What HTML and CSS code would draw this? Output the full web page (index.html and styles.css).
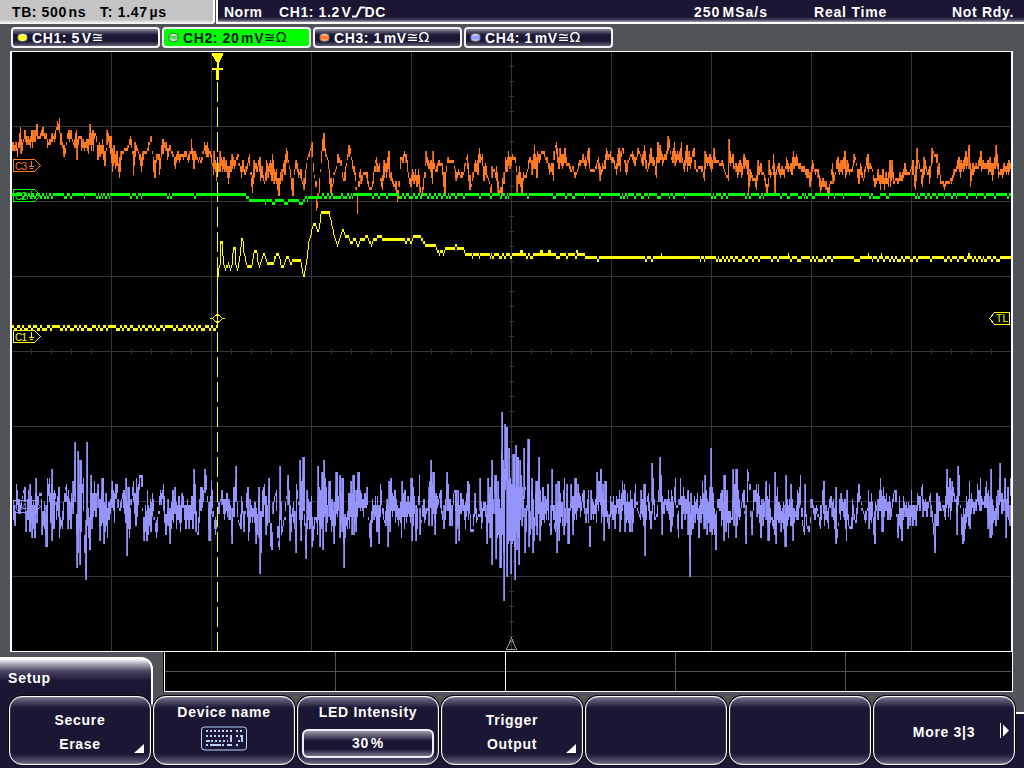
FILE: index.html
```html
<!DOCTYPE html>
<html lang="en">
<head>
    <meta charset="UTF-8">
    <title>Oscilloscope</title>
    <link rel="stylesheet" href="styles.css">
</head>
<body>
    <div class="topbar">
        <div class="timebase"><span class="tb">TB: 500&#8202;ns</span><span class="tpos">T: 1.47&#8202;µs</span></div>
        <div class="status">
            <span class="mode">Norm</span>
            <span class="trig">CH1: 1.2&#8202;V<svg class="edge" width="13" height="12"><path d="M0 10.5h4.5l4-9h4.5"/></svg>DC</span>
            <span class="rate">250&#8202;MSa/s</span>
            <span class="acq">Real Time</span>
            <span class="ready">Not Rdy.</span>
        </div>
    </div>
    <div class="channels">
        <div class="channel"><i class="led yellow"></i><span class="ch-text">CH1: 5&#8202;V</span><span class="coupling">≅</span></div>
        <div class="channel active"><i class="led green"></i><span class="ch-text">CH2: 20&#8202;mV</span><span class="coupling">≅Ω</span></div>
        <div class="channel"><i class="led orange"></i><span class="ch-text">CH3: 1&#8202;mV</span><span class="coupling">≅Ω</span></div>
        <div class="channel"><i class="led violet"></i><span class="ch-text">CH4: 1&#8202;mV</span><span class="coupling">≅Ω</span></div>
    </div>
    <div class="screen">
        <svg class="plot" width="999" height="599" viewBox="12 52 999 599">
            <path id="grid" class="grid"/>
            <g class="marker c3">
                <path d="M13.5 159.5h21l6 6l-6 6h-21z"/><text x="15" y="169.500" textLength="12">C3</text><path d="M31.5 161v6M29 166.5h5M30 168.5h3"/>
            </g>
            <g class="marker c2">
                <path d="M13.5 189.5h21l6 6l-6 6h-21z"/><text x="15" y="199.500" textLength="12">C2</text><path d="M31.5 191v6M29 196.5h5M30 198.5h3"/>
            </g>
            <g class="marker c1">
                <path d="M13.5 330.5h21l6 6l-6 6h-21z"/><text x="15" y="340.500" textLength="12">C1</text><path d="M31.5 332v6M29 337.5h5M30 339.5h3"/>
            </g>
            <path id="trace4-dim" class="trace dim4"/>
            <path id="trace4" class="trace ch4"/>
            <g class="marker c4">
                <path d="M13.5 500.5h21l6 6l-6 6h-21z"/><text x="15" y="510.500" textLength="12">C4</text><path d="M31.5 502v6M29 507.5h5M30 509.5h3"/>
            </g>
            <path id="trace3-dim" class="trace dim3"/>
            <path id="trace3" class="trace ch3"/>
            <path id="trace2" class="trace ch2"/>
            <path id="trace1" class="trace ch1"/>
            <!-- trigger position and level -->
            <path class="cursor" d="M217.5 82V651"/>
            <path class="trig-mark" d="M212 53h11v2l-4 8v5h4v2h-4v10h-3v-10h-4v-2h5v-5l-5-8z"/>
            <path class="level" d="M217.5 314l5 4.500l-5 4.500l-5-4.500zM210 318.500h3M222 318.500h3"/>
            <path class="level" d="M1009.500 312.500h-15l-5 6l5 6h15z"/>
            <text class="level-text" x="996" y="322" textLength="12">TL</text>
            <path class="ref" d="M511.500 638l5 11.500h-10z"/>
        </svg>
    </div>
    <div class="lower">
        <div class="tab">Setup</div>
        <svg class="strip" width="850" height="40">
            <path class="strip-grid" d="M2 19.500h846M172.500 0v39M512.500 0v39M682.500 0v39"/>
            <path class="strip-center" d="M342.500 0v39"/>
            <path class="strip-frame" d="M1 0V39.500H849V0"/>
        </svg>
    </div>
    <div class="menu">
        <button class="softkey"><span>Secure</span><span>Erase</span><svg class="corner" width="10" height="10"><path d="M10 0V9H0z"/></svg></button>
        <button class="softkey top"><span>Device name</span>
            <svg class="keyboard" width="46" height="25">
                <rect x=".5" y="1" width="45" height="23" rx="3"/>
                <path d="M5 5h27M35 5h7M5 10h27M35 10h7M10 15h17M5 19h2M21 19h3M35 19h4" stroke-dasharray="2 2"/>
                <path d="M5 15h4M9 19h11M26 19h5M30 9v7M41 9v7M37 15h2"/>
            </svg>
        </button>
        <button class="softkey top"><span>LED Intensity</span><span class="value">30&#8202;%</span></button>
        <button class="softkey"><span>Trigger</span><span>Output</span><svg class="corner" width="10" height="10"><path d="M10 0V9H0z"/></svg></button>
        <button class="softkey"></button>
        <button class="softkey"></button>
        <button class="softkey"><span>More 3|3</span><svg class="next" width="9" height="15"><path d="M0 0h1v15h-1zM3 1.500l6 6l-6 6z"/></svg></button>
    </div>
    <script src="script.js"></script>
</body>
</html>
```
FILE: styles.css
```css
body {
    margin: 0;
    width: 1024px;
    height: 768px;
    overflow: hidden;
    background-color: #505458;
    color: #fff;
    font-family: "Liberation Sans", Arial, sans-serif;
    font-size: 14px;
    font-weight: bold;
    letter-spacing: 0.5px;
}
span {
    white-space: nowrap;
}
.topbar {
    display: flex;
    height: 24px;
    line-height: 24px;
    background-color: #505458;
}
.timebase {
    box-sizing: border-box;
    width: 215px;
    padding-left: 12px;
    background: linear-gradient(#c4c4c4 20px, #e8e8e8 22px, #fff);
    border-right: 2px solid #fff;
    border-radius: 0 0 3px 0;
    color: #000;
}
.tb {
    display: inline-block;
    width: 88px;
    letter-spacing: 0.6px;
}
.tpos {
    letter-spacing: 0.7px;
}
.status {
    box-sizing: border-box;
    display: flex;
    width: 808px;
    margin-left: 1px;
    padding-left: 6px;
    border-left: 2px solid #fff;
    background: linear-gradient(#1a1633 17px, #4a4660 20px, #aaa8b4 22px, #fff 22px);
}
.mode {
    width: 55px;
}
.trig {
    width: 415px;
    letter-spacing: 0.6px;
}
.edge {
    fill: none;
    stroke: #fff;
    stroke-width: 2;
    vertical-align: -1px;
}
.rate {
    width: 120px;
    letter-spacing: 1px;
}
.acq {
    width: 138px;
    letter-spacing: 0.8px;
}
.ready {
    letter-spacing: 0.7px;
}
.channels {
    display: flex;
    gap: 2px;
    height: 21px;
    padding: 3px 11px;
}
.channel {
    box-sizing: border-box;
    display: flex;
    align-items: center;
    width: 149px;
    height: 21px;
    padding-left: 5px;
    border: 2px solid #f4f4f8;
    border-radius: 4px;
    background: linear-gradient(#8b889b, #1a1633 6px, #1a1633 12px, #625f74);
}
.channel.active {
    background: #0f0;
    color: #0b1c2c;
}
.led {
    box-sizing: border-box;
    width: 11px;
    height: 9px;
    margin-left: -1px;
    margin-right: 4px;
    border: 1px solid #606060;
    border-radius: 5px;
}
.yellow { background: linear-gradient(#ffffc0, #ff0 45%, #ffff70); }
.green { background: linear-gradient(#e0ffe0, #4c4 45%, #d0ffd0); }
.orange { background: linear-gradient(#ffd0b0, #ff7020 45%, #ffb080); }
.violet { background: linear-gradient(#e0e0ff, #9090ff 45%, #c8c8ff); }
.ch-text {
    letter-spacing: 0.6px;
}
.coupling {
    font-family: "DejaVu Sans", sans-serif;
    font-size: 14px;
    font-weight: normal;
    line-height: 17px;
    letter-spacing: 0;
}
/* bottom line of the frame is also the top of the strip */
.screen {
    width: 999px;
    height: 599px;
    margin-left: 10px;
    border: solid #fff;
    border-width: 1px 2px;
    background-color: #000;
}
.plot {
    display: block;
    shape-rendering: crispEdges;
}
.grid {
    fill: none;
    stroke: #363636;
}
.marker path {
    fill: none;
    stroke: currentColor;
}
.marker text {
    fill: currentColor;
    font-size: 10px;
    font-weight: normal;
    letter-spacing: 0;
}
.c1 { color: #ff0; }
.c2 { color: #0f0; }
.c3 { color: #ff7a20; }
.c4 { color: #9494fc; }
.ch1 { fill: #ff0; }
.ch2 { fill: #0f0; }
.ch3 { fill: #ff7a20; }
.ch4 { fill: #9494fc; }
.dim3 { fill: #bd5a18; }
.dim4 { fill: #7474c4; }
.cursor {
    fill: none;
    stroke: #ffff20;
    stroke-dasharray: 20 5;
}
.trig-mark {
    fill: #ff0;
}
.level {
    fill: none;
    stroke: #ff0;
}
.level-text {
    fill: #ff0;
    font-size: 10px;
    font-weight: normal;
    letter-spacing: 0;
}
.ref {
    fill: none;
    stroke: #999;
}
.lower {
    display: flex;
    justify-content: space-between;
    height: 44px;
    padding-right: 11px;
}
.tab {
    position: relative;
    top: 5px;
    box-sizing: border-box;
    width: 153px;
    height: 58px;
    padding: 11px 0 0 8px;
    border: solid #fff;
    border-width: 2px 2px 0 0;
    border-radius: 0 12px 0 0;
    background: linear-gradient(#fff, #aaa8b6 5px, #4b4763 12px, #1a1633 22px);
    letter-spacing: 0.8px;
}
.strip {
    background-color: #000;
    shape-rendering: crispEdges;
}
.strip path {
    fill: none;
}
.strip-grid {
    stroke: #555;
}
.strip-center {
    stroke: #fff;
}
.strip-frame {
    stroke: #fff;
}
.menu {
    display: flex;
    gap: 2px;
    height: 72px;
    padding-left: 9px;
    background: linear-gradient(transparent 16px, #fff 16px, #fff 18px, #1a1633 18px);
}
.softkey {
    position: relative;
    box-sizing: border-box;
    display: flex;
    flex-direction: column;
    justify-content: center;
    align-items: center;
    width: 142px;
    height: 69px;
    padding: 2px 0 0;
    border: 1px solid #fff;
    border-radius: 13px;
    box-shadow: 0 0 0 1px #080810, inset 0 0 1px #fff;
    background: linear-gradient(#77738a, #1a1633 11px, #1a1633 57px, #6c6880);
    color: #fff;
    font: inherit;
    line-height: 24px;
    letter-spacing: 0.7px;
}
.softkey.top {
    justify-content: flex-start;
    padding-top: 3px;
}
.corner {
    position: absolute;
    right: 6px;
    bottom: 10px;
    fill: #fff;
}
.keyboard {
    margin-top: 2px;
    fill: none;
    stroke: #b9d2ff;
}
.keyboard path {
    stroke-width: 2;
    shape-rendering: crispEdges;
}
.value {
    box-sizing: border-box;
    width: 132px;
    height: 29px;
    margin-top: 5px;
    border: 2px solid #f0f0f4;
    border-radius: 6px;
    line-height: 25px;
    background: linear-gradient(#9c99aa, #1a1633 10px, #1a1633 18px, #77738a);
}
.next {
    position: absolute;
    right: 5px;
    top: 26px;
    fill: #fff;
}
```
FILE: script.js
```js
// samples are "x,y" pairs in thirds of a pixel, relative to the x/y of each part
const ch4 = [
    [0, 400, '36,376 39,315 44,370 47,376 50,252 54,340 58,320 62,340 68,290 72,262 76,345 80,395 84,270 88,395 90,252 96,412 100,310 104,412 108,234 112,365 116,290 120,280 124,300 128,404 133,310 138,440 141,234 144,290 148,234 150,368 154,252 156,422 158,207 160,386 164,270 168,310 170,360 174,262 177,412 182,350 186,386 192,280 198,252 204,386 206,270 210,386 214,280 219,340 225,126 228,404 231,503 234,153 236,458 240,180 242,494 245,290 249,234 254,458 258,539 261,126 265,412 267,448 273,225 276,386 282,243 286,350 291,270 294,252 302,422 306,234 312,430 318,280 321,412 326,308 332,340 338,243 342,368 345,252 351,252 354,322 362,330 369,270 375,368 378,234 381,467 385,262 387,412 393,297 399,243 405,376 408,234 412,350 417,225 424,225 426,330 432,422 435,315 438,422 441,270 444,404 450,297 452,395 457,280 462,350 470,412 474,330 481,270 484,315 489,252 495,404 500,390 506,297 510,430 516,270 519,368 525,262 528,386 535,290 540,395 546,280 549,290 555,386 561,297 568,386 573,290 578,386 582,207 588,395 594,404 600,262 606,325 615,207 622,290 627,422 633,243 640,350 645,404 654,310 660,300 666,270 672,360 678,280 681,350 688,297 696,430 699,262 704,340 708,198 712,350 720,386 723,290 732,395 737,340 742,262 746,422 752,300 758,368 764,306 769,430 777,262 782,521 786,270 792,252 800,404 807,234 810,440 817,450 820,310 828,270 831,412 837,450 840,198 844,404 852,350 858,290 866,225 870,422 876,320 880,310 888,458 890,252 894,310 900,380'],
    [290, 400, '32,180 34,422 39,171 42,376 48,476 51,270 57,386 63,290 67,440 72,355 78,350 81,404 84,198 90,440 96,216 99,450 103,180 108,395 117,243 124,395 126,297 132,430 138,216 141,350 150,225 152,412 156,234 162,503 166,345 172,386 175,280 178,386 183,243 186,404 189,225 192,404 198,270 200,395 204,216 210,330 214,280 220,350 222,280 228,322 231,262 236,350 240,440 246,297 252,360 255,290 260,395 262,290 267,430 270,252 276,340 285,376 291,297 294,440 297,243 300,395 303,234 306,350 312,270 316,365 320,297 324,376 330,306 333,412 336,243 342,386 344,270 350,368 356,290 360,368 363,234 367,422 369,262 378,422 384,290 387,225 390,404 393,368 400,300 403,368 408,325 414,330 417,243 418,376 423,180 427,376 429,216 435,404 438,280 443,320 452,270 458,360 464,386 471,216 477,376 482,306 487,376 491,280 496,270 500,430 504,270 507,422 512,280 516,320 520,297 525,386 531,243 534,360 537,252 540,395 546,386 550,376 555,280 558,368 565,345 570,350 572,234 574,386 579,306 585,310 591,430 595,234 600,412 606,180 608,494 611,300 615,225 618,476 624,243 630,467 632,503 636,36 642,603 645,72 649,80 651,530 657,144 663,521 669,162 675,539 680,135 682,450 683,171 687,494 691,180 696,376 702,262 703,144 705,458 710,395 714,117 717,440 726,234 729,458 738,243 741,404 747,171 751,422 756,262 762,368 765,290 768,360 771,252 775,360 783,404 788,207 790,360 796,395 798,252 801,458 804,243 808,422 811,280 816,376 819,270 822,234 823,404 831,252 836,430 840,306 843,252 849,404 855,234 858,360 864,252 870,350 879,270 882,340 888,368 896,270 899,440'],
    [580, 430, '30,350 33,180 39,270 45,207 48,278 51,126 54,245 60,117 64,278 69,162 72,332 75,153 81,278 87,296 90,198 96,270 99,198 105,296 108,198 114,250 117,180 122,305 126,153 132,250 133,162 136,305 141,189 147,305 152,180 158,305 165,162 170,225 180,270 183,180 189,287 193,162 195,377 200,225 204,189 210,296 216,250 217,99 222,270 230,260 236,216 241,81 246,314 250,220 256,207 262,245 266,180 270,305 273,180 277,287 285,144 288,225 294,323 298,207 301,144 303,296 309,171 316,270 321,189 324,287 325,180 330,440 333,189 336,296 342,198 346,278 351,189 356,323 360,198 363,278 366,153 374,296 375,135 381,314 387,189 390,305 393,54 397,314 399,189 405,360 408,243 414,207 418,240 420,189 423,287 426,180 432,332 434,135 438,305 441,180 444,323 447,245 456,270 459,117 464,292 468,117 470,323 474,180 478,270 489,180 492,240 498,341 501,117 507,162 511,260 518,314 519,180 524,216 528,162 531,260 534,162 541,323 544,207 549,287 558,153 564,332 567,162 571,278 577,260 582,314 585,126 588,341 591,171 596,278 600,225 604,305 610,216 615,350 618,135 621,287 627,207 630,287 633,162 639,332 642,234 648,270 651,180 655,270 660,135 663,260 672,314 675,162 680,287 684,305 690,278 693,207 698,207 704,270 709,225 714,250 722,296 729,153 733,287 738,225 744,296 747,207 753,198 756,260 760,207 765,332 768,171 770,341 774,278 778,207 781,270 783,189 789,260 792,207 798,332 801,180 806,287 813,296 818,207 822,270 828,278 834,162 840,207 846,234 855,278 862,234 865,180 867,296 873,189 882,341 886,220 894,270 901,144 906,305 909,171 914,260 918,189 923,270 928,198 930,270 939,189 945,180 948,260 954,323 957,198 963,332 970,198 975,260 978,216 982,296 986,216 990,287 993,180 998,287 1004,225 1008,287 1011,189 1017,240 1026,162 1031,260 1035,207 1040,260 1050,189 1054,225 1065,368 1068,189 1074,287 1077,198 1082,240 1090,225 1097,270 1101,117 1104,260 1107,144 1110,270 1117,153 1122,216 1128,207 1131,314 1134,108 1140,225 1146,341 1150,234 1153,332 1158,198 1164,287 1167,153 1170,296 1173,189 1179,250 1185,216 1188,240 1191,162 1197,243 1200,144 1203,243 1208,207 1212,230 1218,153 1224,296 1226,180 1230,323 1233,117 1236,314 1240,225 1245,287 1250,198 1256,270 1260,99 1265,250 1270,243 1275,144 1278,323 1281,171 1284,270 1290,287 1292,144']
];

const ch3 = [
    [0, 100, '36,178 38,125 44,150 48,125 52,170 56,140 61,82 65,160 70,120 74,87 80,135 86,108 90,145 94,90 97,143 102,90 106,125 109,72 113,120 118,105 122,120 127,82 132,115 138,100 142,143 147,118 151,135 158,100 162,125 168,80 172,65 175,90 177,55 180,134 187,125 193,170 199,130 205,90 209,130 214,90 218,125 224,143 228,90 231,178 235,105 240,105 244,150 249,115 254,152 260,118 264,160 270,73 274,150 277,90 280,150 284,95 288,108 292,178 298,125 302,170 308,120 312,195 318,150 323,90 327,143 332,110 337,215 342,135 347,206 350,150 357,232 363,150 369,160 374,140 380,150 386,140 392,108 397,150 400,222 407,130 411,155 418,160 424,215 430,150 436,160 443,145 448,125 453,110 458,150 462,232 468,160 474,160 479,222 487,118 492,145 498,128 503,178 508,135 514,150 520,165 526,206 532,150 538,185 545,160 550,178 556,150 564,185 570,160 575,118 580,206 586,150 592,180 598,175'],
    [200, 120, '0,125 6,110 10,100 14,66 18,108 22,66 26,110 30,90 36,140 40,162 44,95 48,182 54,130 60,155 62,95 66,155 70,110 74,160 80,120 86,190 90,120 96,145 98,102 104,145 110,110 114,102 118,125 124,172 128,120 134,165 140,155 147,102 152,160 158,218 164,120 170,160 177,112 182,182 186,140 190,182 196,182 200,120 206,172 210,120 213,182 218,102 222,190 228,150 236,228 240,155 246,180 250,125 254,165 260,85 266,130 272,150 278,228 284,150 290,120 294,170 302,150 308,190 312,208 318,130 324,100 330,95 336,66 340,155 345,180 349,272 356,240 362,150 369,40 374,80 378,110 384,120 390,215 396,200 402,160 408,140 412,102 418,128 424,118 428,172 434,180 440,125 448,76 454,112 460,160 464,140 468,200 471,280 474,185 480,145 484,190 490,155 498,160 504,200 510,200 516,205 522,140 528,108 532,160 538,130 542,175 547,208 554,120 558,172 564,95 568,170 574,160 580,205 586,185 591,245 598,200 602,108 608,125 614,95 620,105 625,170 630,200 636,150 642,190 646,150 650,200 656,150 662,220 668,225 672,160 676,130 680,95 684,150 690,120 696,190 699,95 704,150 710,155 716,118 722,140 728,130 732,220 738,140 744,112 750,130 756,120 762,135 768,182 776,150 784,172 790,160 796,130 802,103 808,208 814,190 820,170 826,120 832,165 837,85 842,130 846,100 850,182 856,130 862,175 868,180 870,218'],
    [490, 120, '3,215 6,140 12,150 16,175 20,140 24,220 30,205 33,228 38,175 42,190 46,112 50,155 56,95 60,145 66,105 72,112 78,140 82,215 88,140 94,220 100,160 106,175 112,155 118,112 124,125 128,165 132,76 138,172 142,95 148,125 154,95 160,95 166,120 172,112 178,162 184,125 189,182 194,95 199,66 204,145 210,130 211,85 218,150 224,85 228,140 234,125 240,155 246,140 250,145 256,172 262,150 268,120 274,130 280,105 286,150 294,85 298,150 304,150 310,155 316,145 324,112 330,180 336,130 342,145 348,85 354,120 360,95 364,128 370,115 376,150 380,162 386,85 390,155 394,90 400,85 404,120 410,163 416,120 426,95 432,135 440,115 446,85 452,100 456,135 463,76 468,150 474,150 480,85 484,130 490,110 498,172 503,66 508,125 512,76 518,140 524,105 530,120 535,48 540,100 546,130 552,66 557,137 562,95 568,130 573,66 578,125 584,155 588,76 592,155 598,95 602,145 608,95 612,85 616,145 624,145 634,135 642,182 646,95 652,140 658,105 664,160 672,85 676,125 682,120 690,140 698,120 704,155 710,165 714,182 717,57 722,140 726,100 730,145 738,130 742,178 748,118 754,172 762,103 768,150 772,120 776,218 782,150 788,180 794,170 799,208 804,120 809,165'],
    [750, 120, '30,125 34,160 38,155 42,165 48,218 54,200 57,122 60,175 66,150 69,103 75,218 80,150 86,130 90,178 96,140 102,170 106,135 110,112 115,155 120,130 124,165 129,95 134,150 140,103 146,150 152,130 158,160 164,135 168,172 174,150 181,200 186,122 192,150 198,160 204,145 210,218 216,175 222,200 228,185 234,235 240,180 246,130 250,190 256,160 262,112 267,165 274,120 278,165 282,95 287,178 292,122 298,165 302,150 308,155 313,103 318,130 324,190 331,130 336,175 344,170 351,103 356,155 362,130 368,150 372,198 380,190 386,150 392,208 398,150 402,208 408,160 414,200 417,120 421,198 426,120 430,190 438,175 446,190 452,160 458,185 464,130 470,165 476,155 484,150 488,120 495,214 501,85 506,122 512,150 517,200 523,112 528,160 534,150 538,190 547,85 552,110 558,105 562,178 567,130 572,190 576,180 582,208 588,180 596,185 602,178 608,185 614,145 620,160 625,112 630,172 634,120 640,160 645,95 650,150 657,76 660,200 666,130 672,155 678,130 684,150 690,95 694,155 700,120 706,150 711,120 716,165 721,112 726,180 732,112 736,150 740,76 744,175 750,150 756,172 762,130 768,165 774,122 776,165 782,130']
];

const ch1 = [
    [200, 120, '52,620 53,485 56,450 60,440 61,365 66,370 70,430 74,450 80,445 86,433 92,450 96,440 100,390 105,383 108,440 114,450 120,410 125,365 128,357 132,400 138,430 144,440 156,440 162,400 166,392 170,400 174,430 180,440 186,420 193,403 198,425 206,430 222,430 226,412 233,403 240,420 244,440 252,440 258,420 262,412 268,425 274,430 282,420 288,425 292,420 300,420 304,435 310,470 313,475 318,440 322,410 328,360 334,345 340,315 346,312 352,330 358,330 362,290 368,277 386,277 392,300 400,340 406,365 412,378 418,365 426,340 430,330 436,350 444,350 450,368 458,365 464,358 470,378 478,375 484,358 492,358 500,350 506,365 514,378 520,365 526,358 540,350 548,360 556,358 612,358 618,368 626,360 634,370 642,350 660,350 668,366 676,377 706,377 710,395 718,402 724,395 732,402 740,385 750,385 760,388 768,378 774,385 788,385 794,403 814,403']
];

const ch2 = [
    [200, 120, '135,223 138,232 144,232 147,241 168,241 172,250 176,241 180,250 184,241 188,250 192,241 197,250 203,241 208,250 212,241 216,250 226,250 230,241 236,241 240,250 246,241 252,250 262,250 268,241 292,241 296,250 310,250 314,241 318,232 322,241 328,232 332,241 338,232 360,232']
];

function parse(parts) {
    const points = [];
    parts.forEach(([ox, oy, text]) => {
        text.split(' ').forEach(pair => {
            const [x, y] = pair.split(',').map(Number);
            points.push([ox + x / 3, oy + y / 3]);
        });
    });
    return points;
}

function rect(x, y, w, h) {
    return `M${x} ${y}h${w}v${h}h${-w}z`;
}

// the ADC has steps of 3px
function snap(y) {
    return Math.round((y - 1) / 3) * 3 + 1;
}

// every pixel column spans the values inside it
function columns(points) {
    let d = '';
    const last = Math.floor(points[points.length - 1][0]);
    let i = 0;
    for (let x = Math.floor(points[0][0]); x <= last; x++) {
        let min = Infinity, max = -Infinity;
        while (i < points.length - 2 && points[i + 1][0] <= x) i++;
        for (let j = i; j < points.length - 1 && points[j][0] <= x + 1; j++) {
            const [x1, y1] = points[j], [x2, y2] = points[j + 1];
            [Math.max(x, x1), Math.min(x + 1, x2)].forEach(p => {
                const y = y1 + (y2 - y1) * (p - x1) / (x2 - x1);
                min = Math.min(min, y);
                max = Math.max(max, y);
            });
        }
        if (min === Infinity) continue;
        const top = snap(min - 1.5);
        d += rect(x, top, 1, Math.max(3, snap(max - 1.5) - top));
    }
    return d;
}

// noisy version, a bar for every sample and a dim column next to some of them
function bars(points) {
    let bright = '', dim = '';
    for (let i = 1; i < points.length; i++) {
        const y1 = points[i - 1][1], y2 = points[i][1];
        const x1 = Math.floor(points[i - 1][0]), x2 = Math.floor(points[i][0]);
        const next = i < points.length - 1 ? points[i + 1][1] : y2;
        // end of the bar that is not the sample itself
        const near = (y1 + next) * 0.36 + y2 * 0.28;
        const top = snap(Math.min(y2, near));
        const height = Math.max(3, snap(Math.max(y2, near)) - top);
        bright += rect(x2, top, i % 4 === 1 ? 2 : 1, height);
        if (i % 4 === 3 || Math.abs(y2 - near) > 35) dim += rect(x2 - 1, top, 1, height);
        for (let x = x1 + 1; x < x2; x++) {
            const from = y1 + (y2 - y1) * (x - x1 - 0.5) / (x2 - x1);
            const to = y1 + (y2 - y1) * (x - x1 + 0.5) / (x2 - x1);
            const t = snap(Math.min(from, to));
            bright += rect(x, t, 1, Math.max(3, snap(Math.max(from, to)) - t));
        }
    }
    return [bright, dim];
}

// flat part of a trace that drops one step at the listed [x, width]
function flat(from, to, y, lows) {
    let d = '', x = from;
    lows.forEach(([lx, w]) => {
        d += rect(x, y, lx - x, 3) + rect(lx, y + 3, w, 3);
        x = lx + w;
    });
    return d + rect(x, y, to - x, 3);
}

function set(id, d) {
    document.getElementById(id).setAttribute('d', d);
}

let grid = '';
for (let x = 111; x < 1011; x += 100) grid += `M${x + 0.5} 52V651`;
for (let y = 126; y < 651; y += 75) grid += `M12 ${y + 0.5}H1011`;
for (let x = 31; x < 1011; x += 20) grid += `M${x + 0.5} 349v5`;
for (let y = 66; y < 651; y += 15) grid += `M509 ${y + 0.5}h5`;
set('grid', grid);

const [bright4, dim4] = bars(parse(ch4));
set('trace4', bright4);
set('trace4-dim', dim4);
const [bright3, dim3] = bars(parse(ch3));
set('trace3', bright3);
set('trace3-dim', dim3);

set('trace2', flat(12, 245, 193, [[22, 2], [27, 1], [30, 2], [34, 2], [40, 2], [44, 2], [47, 2], [51, 2], [64, 3], [70, 2], [84, 1], [96, 2], [99, 2], [102, 1], [105, 2], [109, 1], [130, 2], [136, 2], [141, 1], [167, 2], [170, 2], [194, 2]])
    + columns(parse(ch2))
    + flat(320, 1011, 193, [[320, 2], [324, 3], [329, 2], [333, 8], [343, 4], [349, 2], [352, 1], [372, 2], [378, 2], [386, 2], [399, 3], [404, 2], [409, 4], [415, 3], [420, 2], [427, 2], [431, 3], [436, 2], [441, 2], [446, 2], [449, 2], [455, 2], [463, 2], [479, 2], [490, 2], [500, 2], [505, 2], [508, 1], [527, 2], [553, 3], [565, 2], [572, 3], [584, 1], [599, 2], [620, 2], [623, 2], [627, 1], [634, 2], [641, 3], [648, 1], [657, 4], [669, 1], [673, 2], [684, 1], [711, 2], [714, 2], [721, 2], [726, 2], [745, 2], [749, 2], [759, 2], [763, 1], [780, 2], [787, 3], [798, 4], [804, 1], [806, 2], [812, 3], [834, 1], [843, 1], [860, 1], [869, 2], [873, 7], [886, 3], [915, 2], [918, 2], [925, 2], [930, 2], [936, 2], [944, 1], [951, 2], [956, 1], [966, 2], [976, 1], [984, 2], [994, 2], [1007, 2]]));

const left = [];
for (let x = 14, n = 0; x < 214; n++) {
    const w = [3, 2, 4, 2, 3, 5, 2][n % 7];
    left.push([x, w]);
    x += w + [3, 2, 3, 4, 2, 3, 8, 2, 3][n % 9];
}
set('trace1', flat(12, 218, 325, left) + rect(217, 282, 1, 46)
    + columns(parse(ch1))
    + flat(471, 585, 253, [[472, 1], [479, 1], [490, 1], [492, 2], [499, 3], [504, 2], [510, 2], [526, 2], [530, 3], [556, 4], [566, 2], [575, 2]])
    + rect(520, 250, 3, 3) + rect(540, 250, 3, 3) + rect(548, 250, 3, 3) + rect(576, 250, 2, 3)
    + flat(585, 1011, 256, [[597, 2], [645, 2], [651, 2], [700, 1], [704, 1], [716, 2], [719, 3], [724, 2], [728, 2], [733, 2], [738, 4], [745, 3], [752, 2], [758, 2], [771, 2], [777, 2], [790, 2], [797, 4], [810, 2], [814, 2], [818, 5], [825, 2], [831, 2], [854, 6], [872, 1], [877, 2], [883, 2], [889, 2], [893, 2], [897, 4], [903, 2], [910, 3], [916, 2], [930, 2], [944, 3], [950, 2], [957, 2], [964, 3], [972, 2], [976, 2], [981, 2], [984, 3], [991, 2], [996, 4]])
    + rect(661, 253, 1, 3) + rect(788, 253, 1, 3) + rect(868, 253, 1, 3) + rect(881, 253, 1, 3) + rect(968, 253, 2, 3));
```
